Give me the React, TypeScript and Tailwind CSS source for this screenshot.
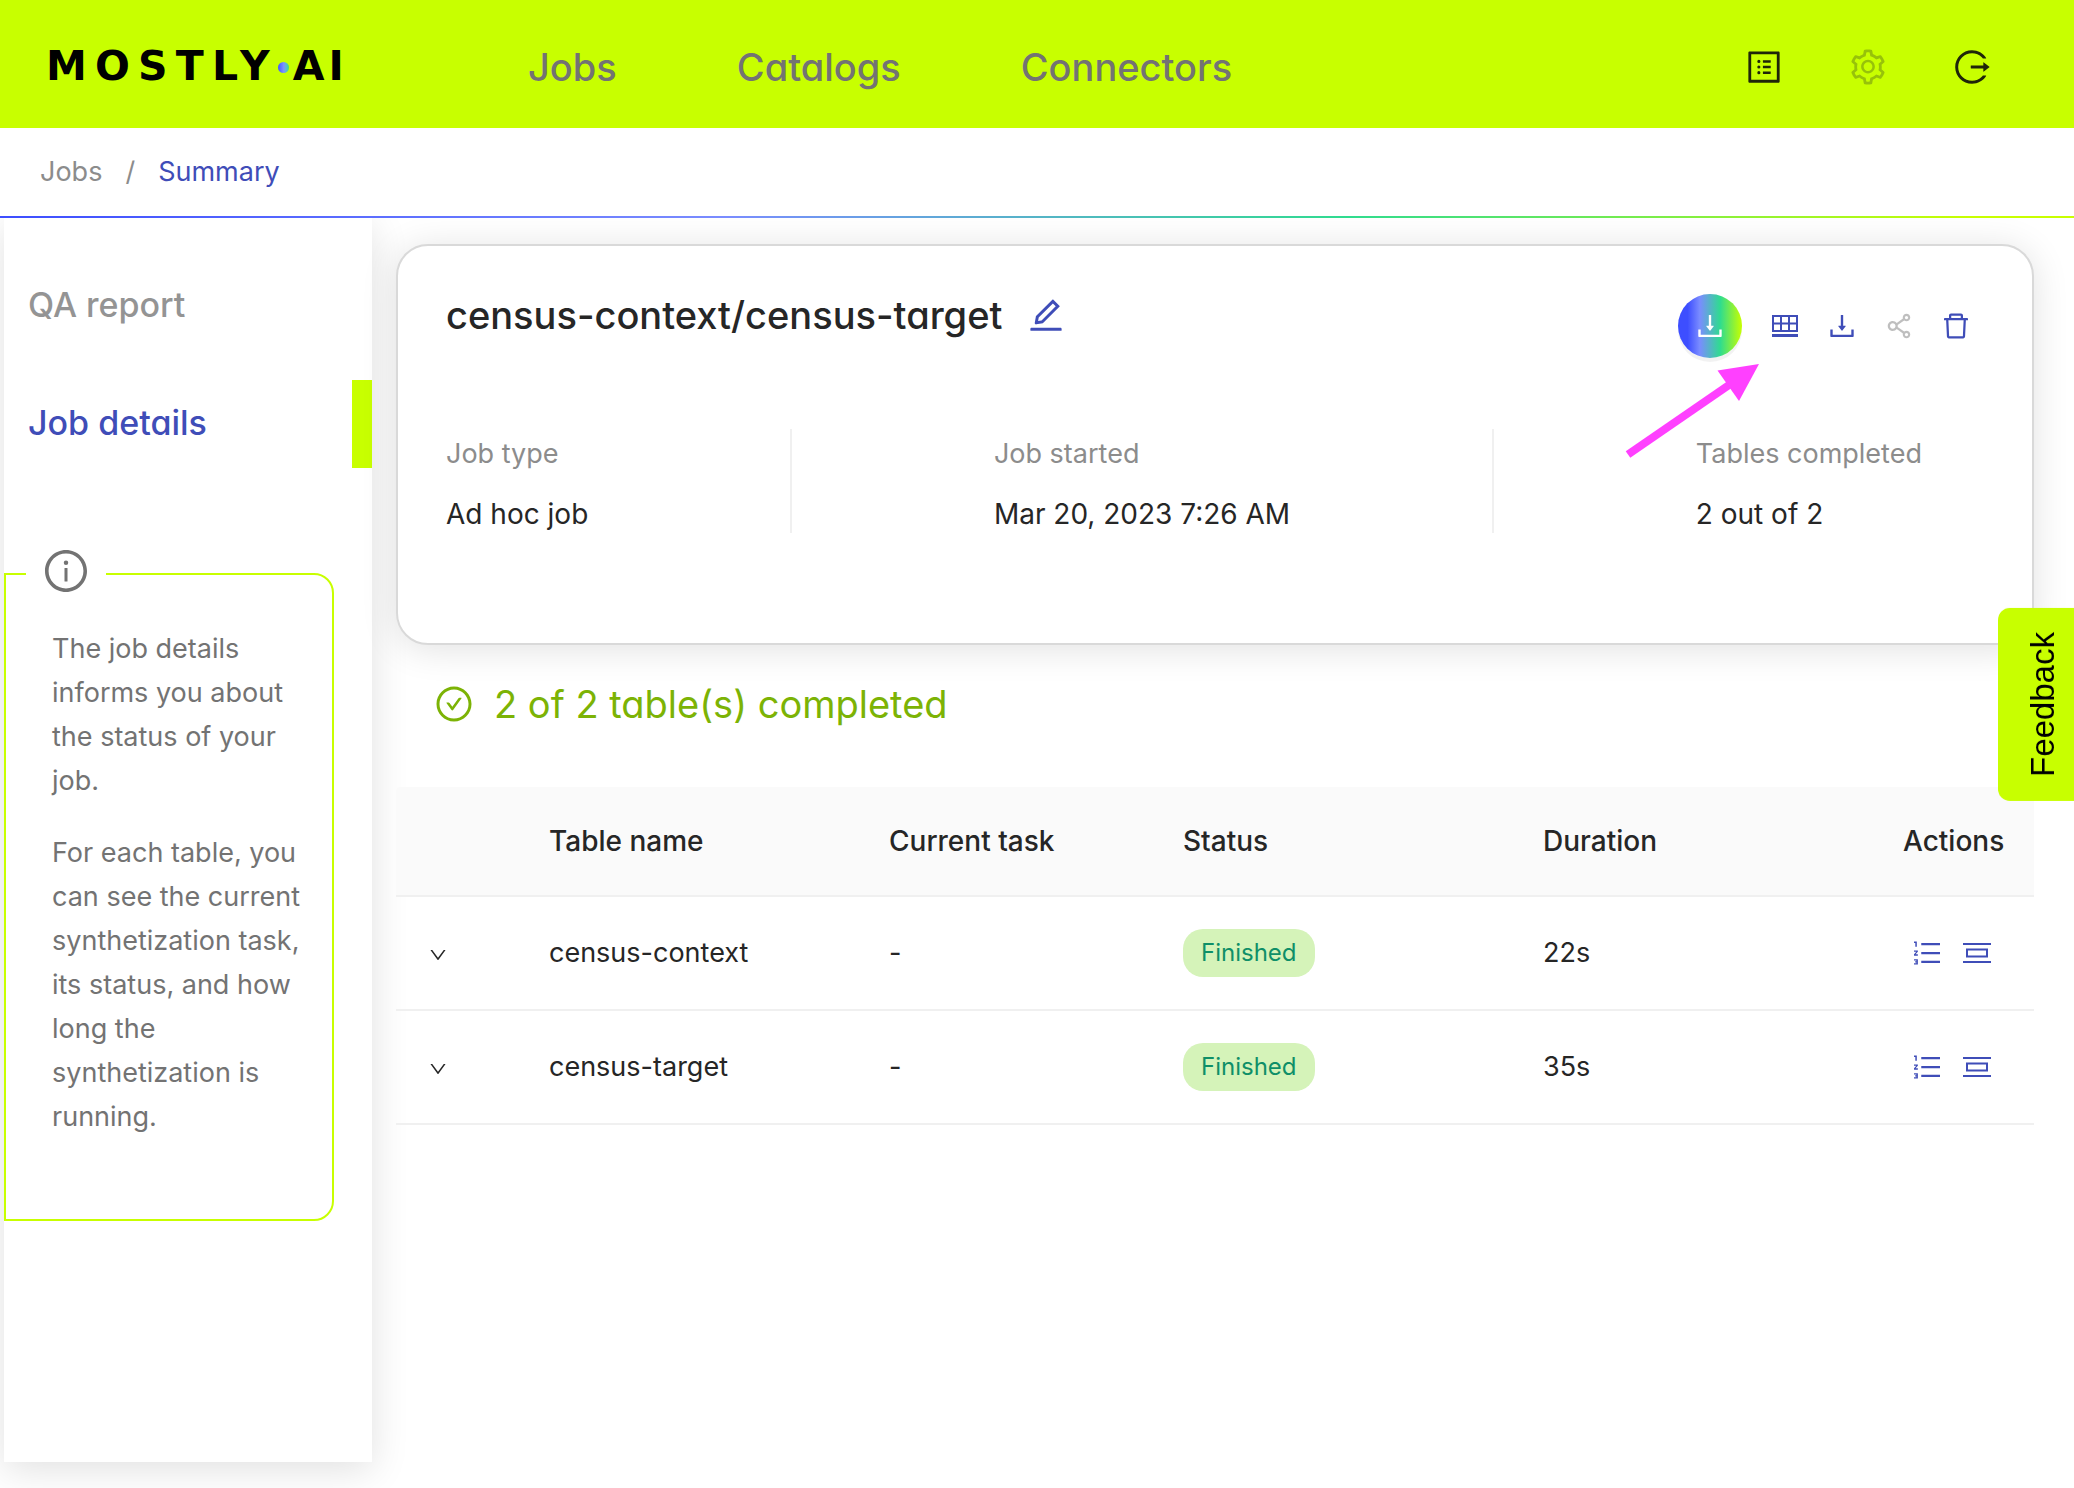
import type { ReactNode } from "react";
import {
  AiOutlineCheckCircle,
  AiOutlineDelete,
  AiOutlineDown,
  AiOutlineDownload,
  AiOutlineEdit,
  AiOutlineInfoCircle,
  AiOutlineLogout,
  AiOutlineOrderedList,
  AiOutlineProfile,
  AiOutlineSetting,
  AiOutlineShareAlt,
} from "react-icons/ai";

const display = "font-['Inter',sans-serif] [font-feature-settings:'cv11']";

function TableIcon() {
  return (
    <svg className="size-7" viewBox="0 0 28 28" fill="none" stroke="currentColor" strokeWidth="2" aria-hidden="true">
      <path d="M2 4h24v15H2zM2 11.500h24M10 4v15M18 4v15" />
      <path d="M1 23.500h26" strokeWidth="3" />
    </svg>
  );
}

function RowIcon() {
  return (
    <svg className="size-7" viewBox="0 0 28 28" fill="none" stroke="currentColor" strokeWidth="2" aria-hidden="true">
      <path d="M0 5h28M0 23h28M4 10.500h20v7H4z" />
    </svg>
  );
}

function IconButton({ label, className = "", children }: { label: string; className?: string; children: ReactNode }) {
  return (
    <button type="button" aria-label={label} className={`flex h-10 w-[57px] items-center justify-center ${className}`}>
      {children}
    </button>
  );
}

function Field({ label, value }: { label: string; value: string }) {
  return (
    <div className="flex flex-col gap-4 pt-[3px] leading-11">
      <dt className="text-[27px] text-[#8c8c8c]">{label}</dt>
      <dd>{value}</dd>
    </div>
  );
}

const rows = [
  { name: "census-context", task: "-", status: "Finished", duration: "22s" },
  { name: "census-target", task: "-", status: "Finished", duration: "35s" },
];

export default function App() {
  return (
    <div className="flex min-h-screen flex-col bg-white font-['Inter',sans-serif] text-[28px] text-[#262626]">
      <header className="flex h-32 items-center bg-[#c8ff00] pt-1.5 pr-[82px] pl-[46px]">
        <a
          href="#home"
          aria-label="MOSTLY AI"
          className="flex w-[482px] items-center font-['DejaVu_Sans',sans-serif] text-[41px] font-bold text-black"
        >
          <span className="tracking-[0.2em]">MOSTLY</span>
          <span className="mr-1 size-[11px] rounded-full bg-linear-to-r from-[#4353ff] via-[#7b8fff] to-[#2fdc8a]" />
          <span className="tracking-widest">AI</span>
        </a>
        <nav className={`flex flex-1 gap-[120px] text-[38px] font-medium text-[#737373] ${display}`}>
          <a href="#jobs">Jobs</a>
          <a href="#catalogs">Catalogs</a>
          <a href="#connectors">Connectors</a>
        </nav>
        <div className="flex items-center gap-16 text-[40px] text-[#1f2609]">
          <button type="button" aria-label="Activity log">
            <AiOutlineProfile />
          </button>
          <button type="button" aria-label="Settings" className="text-[#97c20a]">
            <AiOutlineSetting />
          </button>
          <button type="button" aria-label="Log out">
            <AiOutlineLogout />
          </button>
        </div>
      </header>

      <nav aria-label="Breadcrumb" className="flex h-[88px] items-center gap-[23px] px-10 text-[27px] text-[#8c8c8c]">
        <a href="#jobs">Jobs</a>
        <span>/</span>
        <a href="#summary" className="text-[#3f4db8]">
          Summary
        </a>
      </nav>
      <div className="h-0.5 bg-[linear-gradient(90deg,#3d4eff_0%,#7a8cff_35%,#2fdc8f_65%,#c8ff00_95%)]" />

      <div className="flex flex-1 overflow-hidden pr-10 pb-[26px] pl-1">
        <aside className="w-[368px] shrink-0 bg-white pt-11 shadow-[0_8px_36px_rgba(0,0,0,0.12)]">
          <nav className={`flex flex-col gap-[30px] text-[34px] font-medium ${display}`}>
            <a href="#qa" className="flex h-22 items-center pb-1 pl-6 text-[#949494]">
              QA report
            </a>
            <a href="#details" className="flex h-22 items-center border-r-20 border-[#c8ff00] pb-1 pl-6 text-[#3f4db8]">
              Job details
            </a>
          </nav>
          <section className="relative mt-[105px] mr-[38px] rounded-r-[20px] border-2 border-[#c8ff00] pt-[52px] pr-5 pb-20 pl-[46px] text-[27px] leading-11 text-[#737373]">
            <span className="absolute -top-7 left-5 bg-white px-4 text-[48px]">
              <AiOutlineInfoCircle />
            </span>
            <p>The job details informs you about the status of your job.</p>
            <p className="mt-7">
              For each table, you can see the current synthetization task, its status, and how long the synthetization is
              running.
            </p>
          </section>
        </aside>

        <main className="ml-6 flex-1 pt-[26px]">
          <section className="relative rounded-[32px] border-2 border-[#d9d9d9] bg-white px-12 pt-12 pb-[107px] shadow-[0_4px_36px_rgba(0,0,0,0.12)]">
            <div className="flex justify-between">
              <div className="flex h-11 items-center gap-6 pb-0.5">
                <h1 className={`text-[38px] leading-11 font-medium ${display}`}>census-context/census-target</h1>
                <button type="button" aria-label="Rename job" className="text-[40px] text-[#3f4db8]">
                  <AiOutlineEdit />
                </button>
              </div>
              <div className="flex items-center text-[32px] text-[#3f4db8]">
                <button
                  type="button"
                  aria-label="Download synthetic data"
                  className="mr-3.5 flex size-16 items-center justify-center rounded-full bg-[linear-gradient(90deg,#3d4eff_15%,#7a8cff_34%,#2fdc8f_66%,#c8ff00_100%)] text-white shadow-[0_4px_0_rgba(0,0,0,0.05)]"
                >
                  <AiOutlineDownload />
                </button>
                <IconButton label="View tables">
                  <TableIcon />
                </IconButton>
                <IconButton label="Download">
                  <AiOutlineDownload />
                </IconButton>
                <IconButton label="Share" className="text-[#bfbfbf]">
                  <AiOutlineShareAlt />
                </IconButton>
                <IconButton label="Delete">
                  <AiOutlineDelete />
                </IconButton>
              </div>
            </div>
            <dl className="mt-[71px] flex justify-between pr-[62px]">
              <Field label="Job type" value="Ad hoc job" />
              <div className="h-26 w-0.5 bg-[#f0f0f0]" />
              <Field label="Job started" value="Mar 20, 2023 7:26 AM" />
              <div className="h-26 w-0.5 bg-[#f0f0f0]" />
              <Field label="Tables completed" value="2 out of 2" />
            </dl>
            <svg
              className="absolute top-[114px] right-[268px] h-[100px] w-36"
              viewBox="0 0 144 100"
              fill="#ff40ff"
              aria-hidden="true"
            >
              <path d="M8 94.500L109 25" stroke="#ff40ff" strokeWidth="8" />
              <path d="M139 4L97.500 10.500L119 41z" />
            </svg>
          </section>

          <h2 className={`mt-[35px] flex h-12 items-center gap-5 pl-[38px] text-[38px] text-[#7cb305] ${display}`}>
            <AiOutlineCheckCircle className="size-10" />
            2 of 2 table(s) completed
          </h2>

          <table className="mt-[59px] w-full table-fixed border-separate border-spacing-0 text-left">
            <colgroup>
              <col className="w-[121px]" />
              <col className="w-[340px]" />
              <col className="w-[294px]" />
              <col className="w-[360px]" />
              <col className="w-[360px]" />
              <col className="w-[163px]" />
            </colgroup>
            <thead>
              <tr className="h-[110px] bg-[#fafafa] [&>th]:border-b-2 [&>th]:border-[#f0f0f0] [&>th]:px-8 [&>th]:font-medium">
                <th aria-label="Expand" className="rounded-tl" />
                <th>Table name</th>
                <th>Current task</th>
                <th>Status</th>
                <th>Duration</th>
                <th>Actions</th>
              </tr>
            </thead>
            <tbody className="text-[27px]">
              {rows.map((row) => (
                <tr key={row.name} className="h-[114px] [&>td]:border-b-2 [&>td]:border-[#f0f0f0] [&>td]:px-8">
                  <td>
                    <button type="button" aria-label={`Expand ${row.name}`} className="flex pt-1 text-[20px]">
                      <AiOutlineDown />
                    </button>
                  </td>
                  <td>{row.name}</td>
                  <td>{row.task}</td>
                  <td>
                    <span className="flex h-12 w-fit items-center rounded-[20px] bg-[#d5f3b9] px-[18px] text-2xl text-[#0f8f68]">
                      {row.status}
                    </span>
                  </td>
                  <td>{row.duration}</td>
                  <td>
                    <div className="flex items-center justify-end gap-5 pr-[11px] text-[32px] text-[#3f4db8]">
                      <button type="button" aria-label={`Steps of ${row.name}`}>
                        <AiOutlineOrderedList />
                      </button>
                      <button type="button" aria-label={`Logs of ${row.name}`}>
                        <RowIcon />
                      </button>
                    </div>
                  </td>
                </tr>
              ))}
            </tbody>
          </table>
        </main>
      </div>

      <button
        type="button"
        className="fixed top-[608px] right-0 flex w-[76px] rotate-180 items-center justify-center rounded-r-xl bg-[#c8ff00] pt-6 pr-3.5 pb-6 font-['Liberation_Sans',sans-serif] text-[33px] text-black [writing-mode:vertical-rl]"
      >
        Feedback
      </button>
    </div>
  );
}
